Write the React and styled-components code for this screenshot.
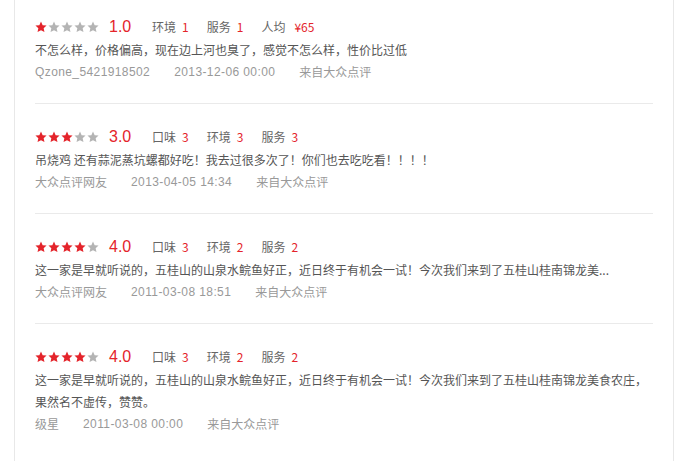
import React from "react";
import styled, { createGlobalStyle } from "styled-components";

const Global = createGlobalStyle`
  html, body { margin: 0; padding: 0; background: #fff; }
  body { font-family: "Noto Sans CJK SC", "Liberation Sans", sans-serif; }
`;

const Panel = styled.div`
  margin-left: 14px;
  width: 660px;
  min-height: 461px;
  box-sizing: border-box;
  border-left: 1px solid #e8e8e8;
  border-right: 1px solid #e8e8e8;
  padding: 0 20px;
`;

const Item = styled.div`
  padding: 20px 0 20px;
  border-bottom: 1px solid ${(p) => (p.$last ? "transparent" : "#eaeaea")};
  &:first-child { padding-top: 14px; }
`;

const ScoreRow = styled.div`
  display: flex;
  align-items: center;
  height: 25px;
  font-size: 12px;
  color: #666;
`;

const Stars = styled.div`
  display: flex;
  gap: 1px;
  margin-right: 10px;
`;

const Rating = styled.span`
  font-family: "Liberation Sans", sans-serif;
  font-size: 16px;
  color: #e4242b;
  margin-right: 23px;
  width: 20px;
`;

const Score = styled.span`
  margin-right: 18px;
  white-space: nowrap;
`;

const Value = styled.span`
  color: #e4242b;
  margin-left: ${(p) => p.$gap || 6}px;
`;

const Text = styled.div`
  font-size: 12px;
  line-height: 22px;
  color: #555;
`;

const Meta = styled.div`
  display: flex;
  font-size: 12px;
  line-height: 22px;
  color: #999;
  gap: 24px;
`;

const MetaPart = styled.span`
  font-family: ${(p) =>
    p.$latin
      ? '"Liberation Sans", "Noto Sans CJK SC", sans-serif'
      : '"Noto Sans CJK SC", sans-serif'};
  letter-spacing: ${(p) => (p.$latin ? "0.4px" : "0")};
`;

const Star = ({ on }) => (
  <svg width="12" height="12" viewBox="0 0 24 24">
    <path
      d="M12 1.2l3.3 7.1 7.8.9-5.8 5.3 1.6 7.7L12 18.3l-6.9 3.9 1.6-7.7L.9 9.2l7.8-.9z"
      fill={on ? "#e4242b" : "#b4b4b4"}
    />
  </svg>
);

const reviews = [
  {
    stars: 1,
    rating: "1.0",
    scores: [["环境", "1"], ["服务", "1"], ["人均", "¥65", 9]],
    text: "不怎么样，价格偏高，现在边上河也臭了，感觉不怎么样，性价比过低",
    user: "Qzone_5421918502",
    latinUser: true,
    date: "2013-12-06 00:00",
  },
  {
    stars: 3,
    rating: "3.0",
    scores: [["口味", "3"], ["环境", "3"], ["服务", "3"]],
    text: "吊烧鸡 还有蒜泥蒸坑螺都好吃！我去过很多次了！你们也去吃吃看！！！！",
    user: "大众点评网友",
    date: "2013-04-05 14:34",
  },
  {
    stars: 4,
    rating: "4.0",
    scores: [["口味", "3"], ["环境", "2"], ["服务", "2"]],
    text: "这一家是早就听说的，五桂山的山泉水鲩鱼好正，近日终于有机会一试！今次我们来到了五桂山桂南锦龙美...",
    user: "大众点评网友",
    date: "2011-03-08 18:51",
  },
  {
    stars: 4,
    rating: "4.0",
    scores: [["口味", "3"], ["环境", "2"], ["服务", "2"]],
    text: "这一家是早就听说的，五桂山的山泉水鲩鱼好正，近日终于有机会一试！今次我们来到了五桂山桂南锦龙美食农庄，果然名不虚传，赞赞。",
    user: "级星",
    date: "2011-03-08 00:00",
  },
];

export default function App() {
  return (
    <>
      <Global />
      <Panel>
        {reviews.map((r, i) => (
          <Item key={i} $last={i === reviews.length - 1}>
            <ScoreRow>
              <Stars>
                {[0, 1, 2, 3, 4].map((s) => (
                  <Star key={s} on={s < r.stars} />
                ))}
              </Stars>
              <Rating>{r.rating}</Rating>
              {r.scores.map(([label, val, gap]) => (
                <Score key={label}>
                  {label}
                  <Value $gap={gap}>{val}</Value>
                </Score>
              ))}
            </ScoreRow>
            <Text>{r.text}</Text>
            <Meta>
              <MetaPart $latin={r.latinUser}>{r.user}</MetaPart>
              <MetaPart $latin>{r.date}</MetaPart>
              <MetaPart>来自大众点评</MetaPart>
            </Meta>
          </Item>
        ))}
      </Panel>
    </>
  );
}
